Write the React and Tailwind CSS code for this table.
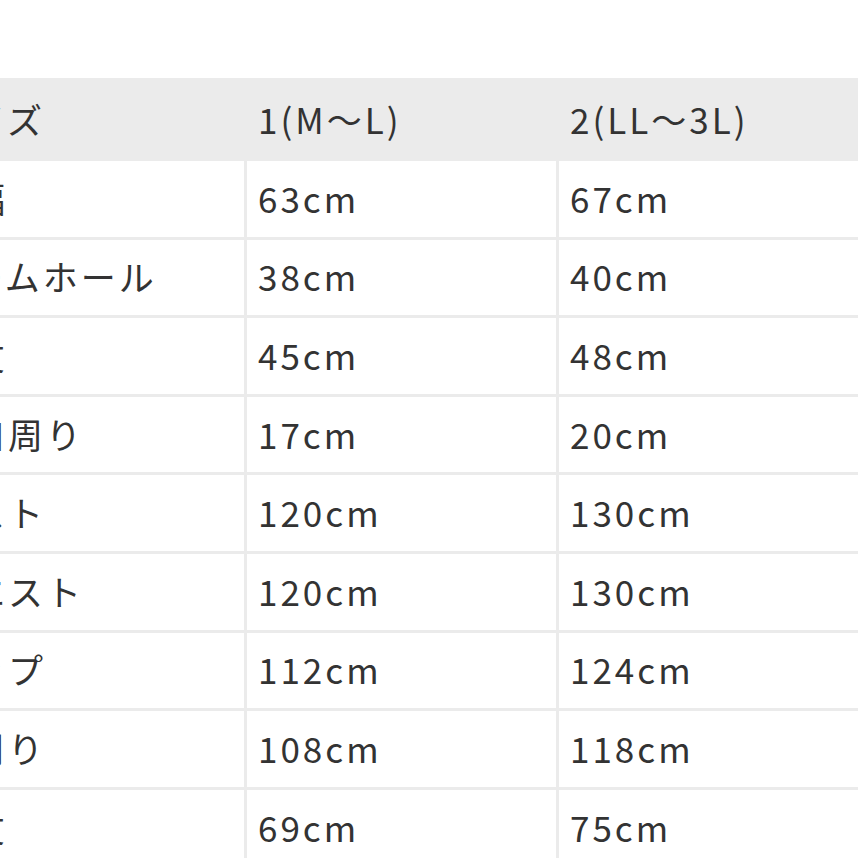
const ROWS = [
  ['肩幅', '63cm', '67cm'],
  ['アームホール', '38cm', '40cm'],
  ['袖丈', '45cm', '48cm'],
  ['袖口周り', '17cm', '20cm'],
  ['バスト', '120cm', '130cm'],
  ['ウエスト', '120cm', '130cm'],
  ['ヒップ', '112cm', '124cm'],
  ['裾周り', '108cm', '118cm'],
  ['着丈', '69cm', '75cm'],
]

export default function App() {
  return (
    <div
      className="w-[858px] h-[858px] overflow-hidden bg-white text-[#333333] text-[35px] tracking-[3px] leading-none"
      style={{ fontFamily: '"Noto Sans CJK JP", "Noto Sans", sans-serif' }}
    >
      <div className="pt-[78px] ml-[-79px] w-[1260px]">
        {/* Header */}
        <div className="flex h-[83px] items-center pb-[2px] bg-[#ebebeb]">
          <div className="w-[326px] pl-[11px] whitespace-nowrap">サイズ</div>
          <div className="w-[312px] pl-[11px] whitespace-nowrap">1(M〜L)</div>
          <div className="flex-1 pl-[11px] whitespace-nowrap">2(LL〜3L)</div>
        </div>

        {/* Body */}
        {ROWS.map(([label, a, b]) => (
          <div key={label} className="flex h-[78.6px] border-b-[3px] border-[#ebebeb]">
            <div className="w-[326px] pl-[11px] pb-[3px] flex items-center whitespace-nowrap border-r-[3px] border-[#ebebeb]">
              {label}
            </div>
            <div className="w-[312px] pl-[11px] pb-[3px] flex items-center whitespace-nowrap border-r-[3px] border-[#ebebeb]">
              {a}
            </div>
            <div className="flex-1 pl-[11px] pb-[3px] flex items-center whitespace-nowrap">
              {b}
            </div>
          </div>
        ))}
      </div>
    </div>
  )
}
